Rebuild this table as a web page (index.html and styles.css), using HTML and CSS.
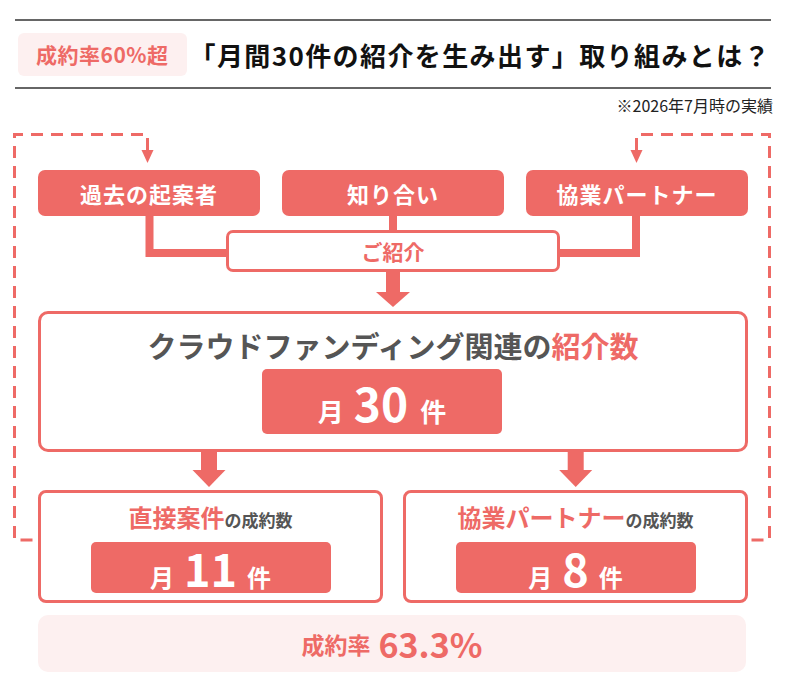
FILE: index.html
```html
<!DOCTYPE html>
<html lang="ja">
<head>
<meta charset="utf-8">
<title>紹介数</title>
<link rel="stylesheet" href="styles.css">
</head>
<body>
<div class="page">
  <svg class="loop" width="786" height="686" viewBox="0 0 786 686" aria-hidden="true">
    <path class="dash" d="M147.5 150 V134.5 H14.5 V540 H38"/>
    <path class="dash" d="M636.5 150 V134.5 H769.5 V540 H748"/>
    <polygon class="head" points="141.5,150 153.5,150 147.5,163"/>
    <polygon class="head" points="630.5,150 642.5,150 636.5,163"/>
  </svg>

  <header class="head-bar">
    <span class="badge">成約率60%超</span>
    <h1 class="title">「月間30件の紹介を生み出す」取り組みとは？</h1>
  </header>
  <p class="note">※2026年7月時の実績</p>

  <div class="diagram">
    <div class="sources">
      <div class="src">過去の起案者</div>
      <div class="src">知り合い</div>
      <div class="src">協業パートナー</div>
    </div>

    <div class="merge">
      <svg class="merge-lines" width="710" height="56" viewBox="0 0 710 56" aria-hidden="true">
        <path d="M111.5 0 V37 H190"/>
        <path d="M355 0 V16"/>
        <path d="M598 0 V37 H520"/>
      </svg>
      <div class="intro">ご紹介</div>
    </div>

    <div class="arrow-one">
      <svg width="710" height="39" viewBox="0 0 710 39" aria-hidden="true">
        <rect x="348" y="0" width="14" height="21"/>
        <polygon points="338,20 372,20 355,35"/>
      </svg>
    </div>

    <div class="main">
      <h2 class="main-title">クラウドファンディング関連の<em>紹介数</em></h2>
      <div class="pill pill-main"><span class="unit">月</span><span class="num">30</span><span class="unit">件</span></div>
    </div>

    <div class="arrow-two">
      <svg width="710" height="38" viewBox="0 0 710 38" aria-hidden="true">
        <rect x="163" y="0" width="16" height="19"/>
        <polygon points="154.5,18 187.5,18 171,35"/>
        <rect x="529.7" y="0" width="16" height="19"/>
        <polygon points="521.2,18 554.2,18 537.7,35"/>
      </svg>
    </div>

    <div class="results">
      <div class="res">
        <p class="res-title"><em>直接案件</em>の成約数</p>
        <div class="pill pill-sub"><span class="unit">月</span><span class="num">11</span><span class="unit">件</span></div>
      </div>
      <div class="res">
        <p class="res-title"><em>協業パートナー</em>の成約数</p>
        <div class="pill pill-sub"><span class="unit">月</span><span class="num">8</span><span class="unit">件</span></div>
      </div>
    </div>

    <div class="rate"><span class="rate-label">成約率</span><span class="rate-num">63.3%</span></div>
  </div>
</div>
</body>
</html>
```

FILE: styles.css
```css
* { box-sizing: border-box; }

html, body {
  margin: 0;
  padding: 0;
  background: #ffffff;
}

body {
  font-family: "Noto Sans CJK JP", "Noto Sans", sans-serif;
  color: #222;
}

.page {
  position: relative;
  width: 786px;
  height: 686px;
  overflow: hidden;
}

.loop {
  position: absolute;
  left: 0;
  top: 0;
  pointer-events: none;
}

.loop .dash {
  fill: none;
  stroke: #ee6a66;
  stroke-width: 3;
  stroke-dasharray: 12 8;
}

.loop .head {
  fill: #ee6a66;
}

.head-bar {
  margin: 19px 15px 0;
  height: 70px;
  border-top: 2px solid #666;
  border-bottom: 2px solid #666;
  display: flex;
  align-items: center;
  padding-left: 3px;
}

.badge {
  width: 169px;
  height: 43px;
  display: flex;
  align-items: center;
  justify-content: center;
  background: #fdf0f0;
  border-radius: 6px;
  color: #ee6a66;
  font-size: 21px;
  font-weight: 700;
  letter-spacing: 0.5px;
}

.title {
  margin: 0 0 0 3px;
  font-size: 26px;
  font-weight: 700;
  letter-spacing: 1.4px;
  color: #111;
  white-space: nowrap;
}

.note {
  margin: 6px 0 0;
  padding-right: 13px;
  text-align: right;
  font-size: 16px;
  line-height: 21px;
  color: #222;
}

.diagram {
  margin: 54px 0 0 38px;
  width: 710px;
}

.sources {
  display: grid;
  grid-template-columns: repeat(3, 222px);
  gap: 22px;
}

.src {
  height: 46px;
  background: #ee6a66;
  border-radius: 7px;
  color: #fff;
  font-size: 22px;
  font-weight: 700;
  letter-spacing: 1px;
  display: flex;
  align-items: center;
  justify-content: center;
}

.merge {
  position: relative;
  height: 56px;
  display: flex;
  justify-content: center;
  align-items: flex-end;
}

.merge-lines {
  position: absolute;
  left: 0;
  top: 0;
}

.merge-lines path {
  fill: none;
  stroke: #ee6a66;
  stroke-width: 8;
}

.intro {
  position: relative;
  width: 334px;
  height: 42px;
  background: #fff;
  border: 3px solid #ee6a66;
  border-radius: 7px;
  color: #ee6a66;
  font-size: 21px;
  font-weight: 700;
  display: flex;
  align-items: center;
  justify-content: center;
}

.arrow-one svg,
.arrow-two svg {
  display: block;
  fill: #ee6a66;
}

.main {
  height: 141px;
  border: 3px solid #ee6a66;
  border-radius: 10px;
  padding-top: 13px;
}

.main-title {
  margin: 0;
  text-align: center;
  font-size: 29px;
  line-height: 36px;
  font-weight: 700;
  color: #555;
}

.main-title em,
.res-title em {
  font-style: normal;
  color: #ee6a66;
}

.pill {
  width: 240px;
  background: #ee6a66;
  color: #fff;
  font-weight: 700;
  display: flex;
  align-items: baseline;
  justify-content: center;
  border-radius: 5px;
}

.pill-main {
  height: 65px;
  margin: 6px 0 0 221px;
  padding-top: 2px;
  line-height: 63px;
}

.pill-main .unit { font-size: 26px; }
.pill-main .num { font-size: 46px; margin: 0 12px 0 10px; }

.results {
  display: grid;
  grid-template-columns: 345px 345px;
  gap: 20px;
}

.res {
  height: 113px;
  border: 3px solid #ee6a66;
  border-radius: 8px;
  padding-top: 8px;
}

.res-title {
  margin: 0;
  text-align: center;
  font-size: 17px;
  line-height: 32px;
  font-weight: 700;
  color: #555;
}

.res-title em {
  font-size: 24px;
}

.pill-sub {
  height: 51px;
  margin: 6px auto 0;
  line-height: 51px;
}

.pill-sub .unit { font-size: 24px; }
.pill-sub .num { font-size: 45px; margin: 0 10px; }

.rate {
  margin-top: 12px;
  width: 708px;
  height: 57px;
  background: #fdf0f0;
  border-radius: 10px;
  display: flex;
  align-items: center;
  justify-content: center;
  color: #ee6a66;
  font-weight: 700;
}

.rate-label {
  font-size: 23px;
  margin-right: 8px;
}

.rate-num {
  font-size: 34px;
}
```
